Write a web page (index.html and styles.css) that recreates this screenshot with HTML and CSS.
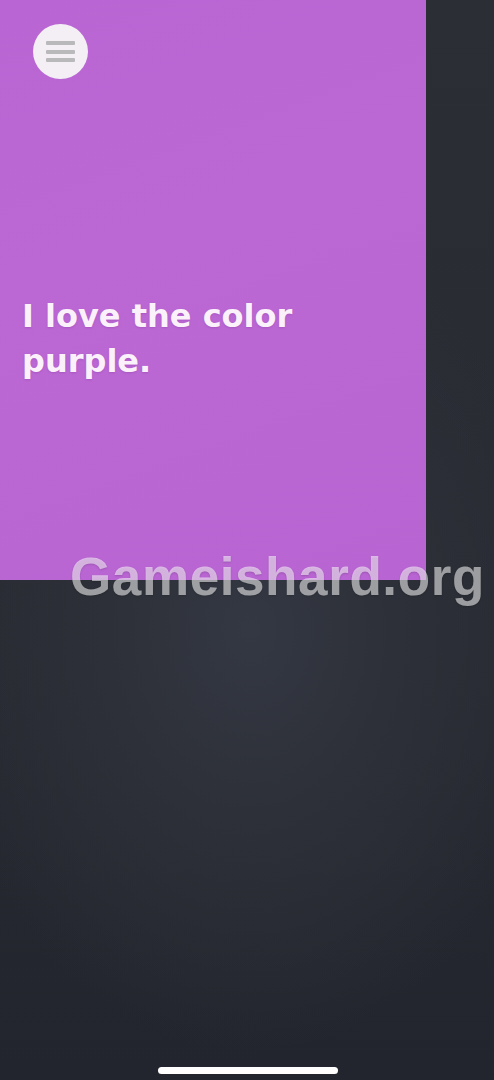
FILE: index.html
```html
<!DOCTYPE html>
<html lang="en">
<head>
<meta charset="utf-8">
<title>I love the color purple.</title>
<link rel="stylesheet" href="styles.css">
</head>
<body>
<div class="screen">
  <section class="card">
    <button class="menu" aria-label="Menu">
      <span class="bar"></span>
      <span class="bar"></span>
      <span class="bar"></span>
    </button>
    <p class="quote">I love the color purple.</p>
  </section>
  <div class="watermark">Gameishard.org</div>
  <div class="home-indicator"></div>
</div>
</body>
</html>
```
FILE: styles.css
```css
html, body {
  margin: 0;
  padding: 0;
}
body {
  width: 494px;
  height: 1080px;
  overflow: hidden;
  background: #26292f;
}
.screen {
  position: relative;
  width: 494px;
  height: 1080px;
  display: flex;
  flex-direction: column;
  background:
    radial-gradient(ellipse 320px 420px at 250px 630px, #343843 0%, #2d3038 45%, rgba(38,41,48,0) 100%),
    linear-gradient(180deg, #2b2e35 0%, #272a31 60%, #22252d 100%);
}
.card {
  width: 426px;
  height: 580px;
  box-sizing: border-box;
  padding: 24px 0 0 33px;
  background: linear-gradient(160deg, #b965d3 0%, #bb68d4 40%, #b864d2 100%);
  display: flex;
  flex-direction: column;
  align-items: flex-start;
}
.menu {
  width: 55px;
  height: 55px;
  border: 0;
  padding: 0;
  border-radius: 50%;
  background: #f3eff4;
  display: flex;
  flex-direction: column;
  align-items: center;
  justify-content: center;
  gap: 4.5px;
}
.bar {
  display: block;
  width: 29px;
  height: 4px;
  border-radius: 1px;
  background: #b9b9bb;
}
.quote {
  margin: 215px 0 0 -11px;
  width: 320px;
  font-family: "DejaVu Sans", "Noto Sans", sans-serif;
  font-weight: 700;
  font-size: 32px;
  line-height: 45px;
  letter-spacing: 0;
  color: #fbf1fb;
  text-shadow: 0 1px 2px rgba(120, 40, 140, 0.25);
}
.watermark {
  position: absolute;
  left: 70px;
  top: 547px;
  font-family: "Liberation Sans", Arial, sans-serif;
  font-weight: 700;
  font-size: 53px;
  letter-spacing: 0.6px;
  line-height: 60px;
  color: rgba(255, 255, 255, 0.55);
  text-shadow: 0 1px 2px rgba(0, 0, 0, 0.15);
}
.home-indicator {
  position: absolute;
  left: 158px;
  top: 1067px;
  width: 180px;
  height: 7px;
  border-radius: 4px;
  background: #ffffff;
}
```
